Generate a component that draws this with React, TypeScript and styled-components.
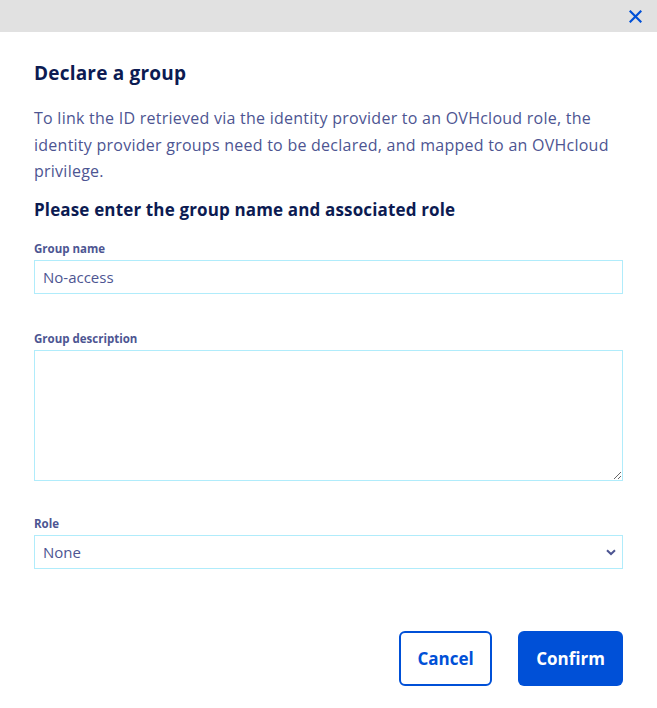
import React, { useState } from 'react';
import styled, { createGlobalStyle } from 'styled-components';

const GlobalStyle = createGlobalStyle`
    html, body {
        margin: 0;
        padding: 0;
        background: #ffffff;
        font-family: "Open Sans", Lato, sans-serif;
    }
    * {
        box-sizing: border-box;
    }
`;

const App: React.FC = () => {
    const [name, setName] = useState<string>('No-access');
    const [description, setDescription] = useState<string>('');
    const [role, setRole] = useState<string>('none');

    return (
        <>
            <GlobalStyle />
            <Modal>
                <TopBar>
                    <CloseButton aria-label="Close">
                        <svg width="13" height="13" viewBox="0 0 13 13">
                            <path d="M1.5 1.5 L11.5 11.5 M11.5 1.5 L1.5 11.5" stroke="#0050d7" strokeWidth="2.2" strokeLinecap="square" />
                        </svg>
                    </CloseButton>
                </TopBar>
                <Body>
                    <Title>Declare a group</Title>
                    <Intro>
                        To link the ID retrieved via the identity provider to an OVHcloud role, the identity
                        provider groups need to be declared, and mapped to an OVHcloud privilege.
                    </Intro>
                    <SubTitle>Please enter the group name and associated role</SubTitle>

                    <Field>
                        <Label htmlFor="group-name">Group name</Label>
                        <TextInput id="group-name" value={name} onChange={(e) => setName(e.target.value)} />
                    </Field>

                    <Field $gap={37}>
                        <Label htmlFor="group-desc">Group description</Label>
                        <TextArea
                            id="group-desc"
                            value={description}
                            onChange={(e) => setDescription(e.target.value)}
                        />
                    </Field>

                    <Field $gap={35}>
                        <Label htmlFor="group-role">Role</Label>
                        <SelectWrap>
                            <Select id="group-role" value={role} onChange={(e) => setRole(e.target.value)}>
                                <option value="none">None</option>
                                <option value="admin">Admin</option>
                                <option value="unprivileged">Unprivileged</option>
                            </Select>
                            <Chevron width="10" height="7" viewBox="0 0 10 7">
                                <path d="M1 1.2 L5 5 L9 1.2" stroke="#4d5592" strokeWidth="2" fill="none" />
                            </Chevron>
                        </SelectWrap>
                    </Field>

                    <Actions>
                        <SecondaryButton>Cancel</SecondaryButton>
                        <PrimaryButton>Confirm</PrimaryButton>
                    </Actions>
                </Body>
            </Modal>
        </>
    );
};

const Modal = styled.div`
    width: 657px;
    min-height: 708px;
    background: #ffffff;
`;

const TopBar = styled.div`
    height: 32px;
    background-color: #e1e1e1;
    display: flex;
    justify-content: flex-end;
    align-items: center;
    padding-right: 12px;
`;

const CloseButton = styled.button`
    border: none;
    background: transparent;
    padding: 3px;
    margin-top: 1px;
    display: flex;
    cursor: pointer;
`;

const Body = styled.div`
    padding: 27px 34px 0 34px;
    display: flex;
    flex-direction: column;
`;

const Title = styled.h2`
    margin: 0;
    font-size: 19px;
    line-height: 28px;
    font-weight: 700;
    letter-spacing: 0.2px;
    color: #0c1b52;
`;

const Intro = styled.p`
    margin: 18px 0 0 0;
    font-size: 16px;
    line-height: 26.5px;
    letter-spacing: 0.25px;
    color: #4d5592;
`;

const SubTitle = styled.h3`
    margin: 13px 0 0 0;
    font-size: 17px;
    line-height: 24px;
    font-weight: 700;
    letter-spacing: 0.15px;
    color: #0c1b52;
`;

const Field = styled.div<{ $gap?: number }>`
    display: flex;
    flex-direction: column;
    gap: 3px;
    margin-top: ${(p) => p.$gap ?? 19}px;
`;

const Label = styled.label`
    font-size: 11.5px;
    line-height: 16px;
    font-weight: 700;
    color: #4d5592;
`;

const TextInput = styled.input`
    width: 100%;
    height: 34px;
    border: 1px solid #b0ecfb;
    border-radius: 0;
    padding: 0 8px;
    font-family: inherit;
    font-size: 15px;
    color: #4d5592;
    outline: none;
`;

const TextArea = styled.textarea`
    width: 100%;
    height: 131px;
    border: 1px solid #b0ecfb;
    border-radius: 0;
    padding: 6px 8px;
    font-family: inherit;
    font-size: 15px;
    color: #4d5592;
    outline: none;
    resize: vertical;
    display: block;
`;

const SelectWrap = styled.div`
    position: relative;
`;

const Select = styled.select`
    width: 100%;
    height: 34px;
    border: 1px solid #b0ecfb;
    border-radius: 0;
    background: #ffffff;
    padding: 0 8px;
    font-family: inherit;
    font-size: 15px;
    color: #4d5592;
    appearance: none;
    outline: none;
`;

const Chevron = styled.svg`
    position: absolute;
    right: 7px;
    top: 14px;
    pointer-events: none;
`;

const Actions = styled.div`
    display: flex;
    justify-content: flex-end;
    gap: 26px;
    margin-top: 62px;
`;

const BaseButton = styled.button`
    height: 55px;
    border-radius: 6px;
    font-family: inherit;
    font-size: 17px;
    font-weight: 700;
    cursor: pointer;
`;

const SecondaryButton = styled(BaseButton)`
    width: 93px;
    background: #ffffff;
    color: #0050d7;
    border: 2px solid #0050d7;
`;

const PrimaryButton = styled(BaseButton)`
    width: 105px;
    background: #0050d7;
    color: #ffffff;
    border: none;
`;

export default App;
